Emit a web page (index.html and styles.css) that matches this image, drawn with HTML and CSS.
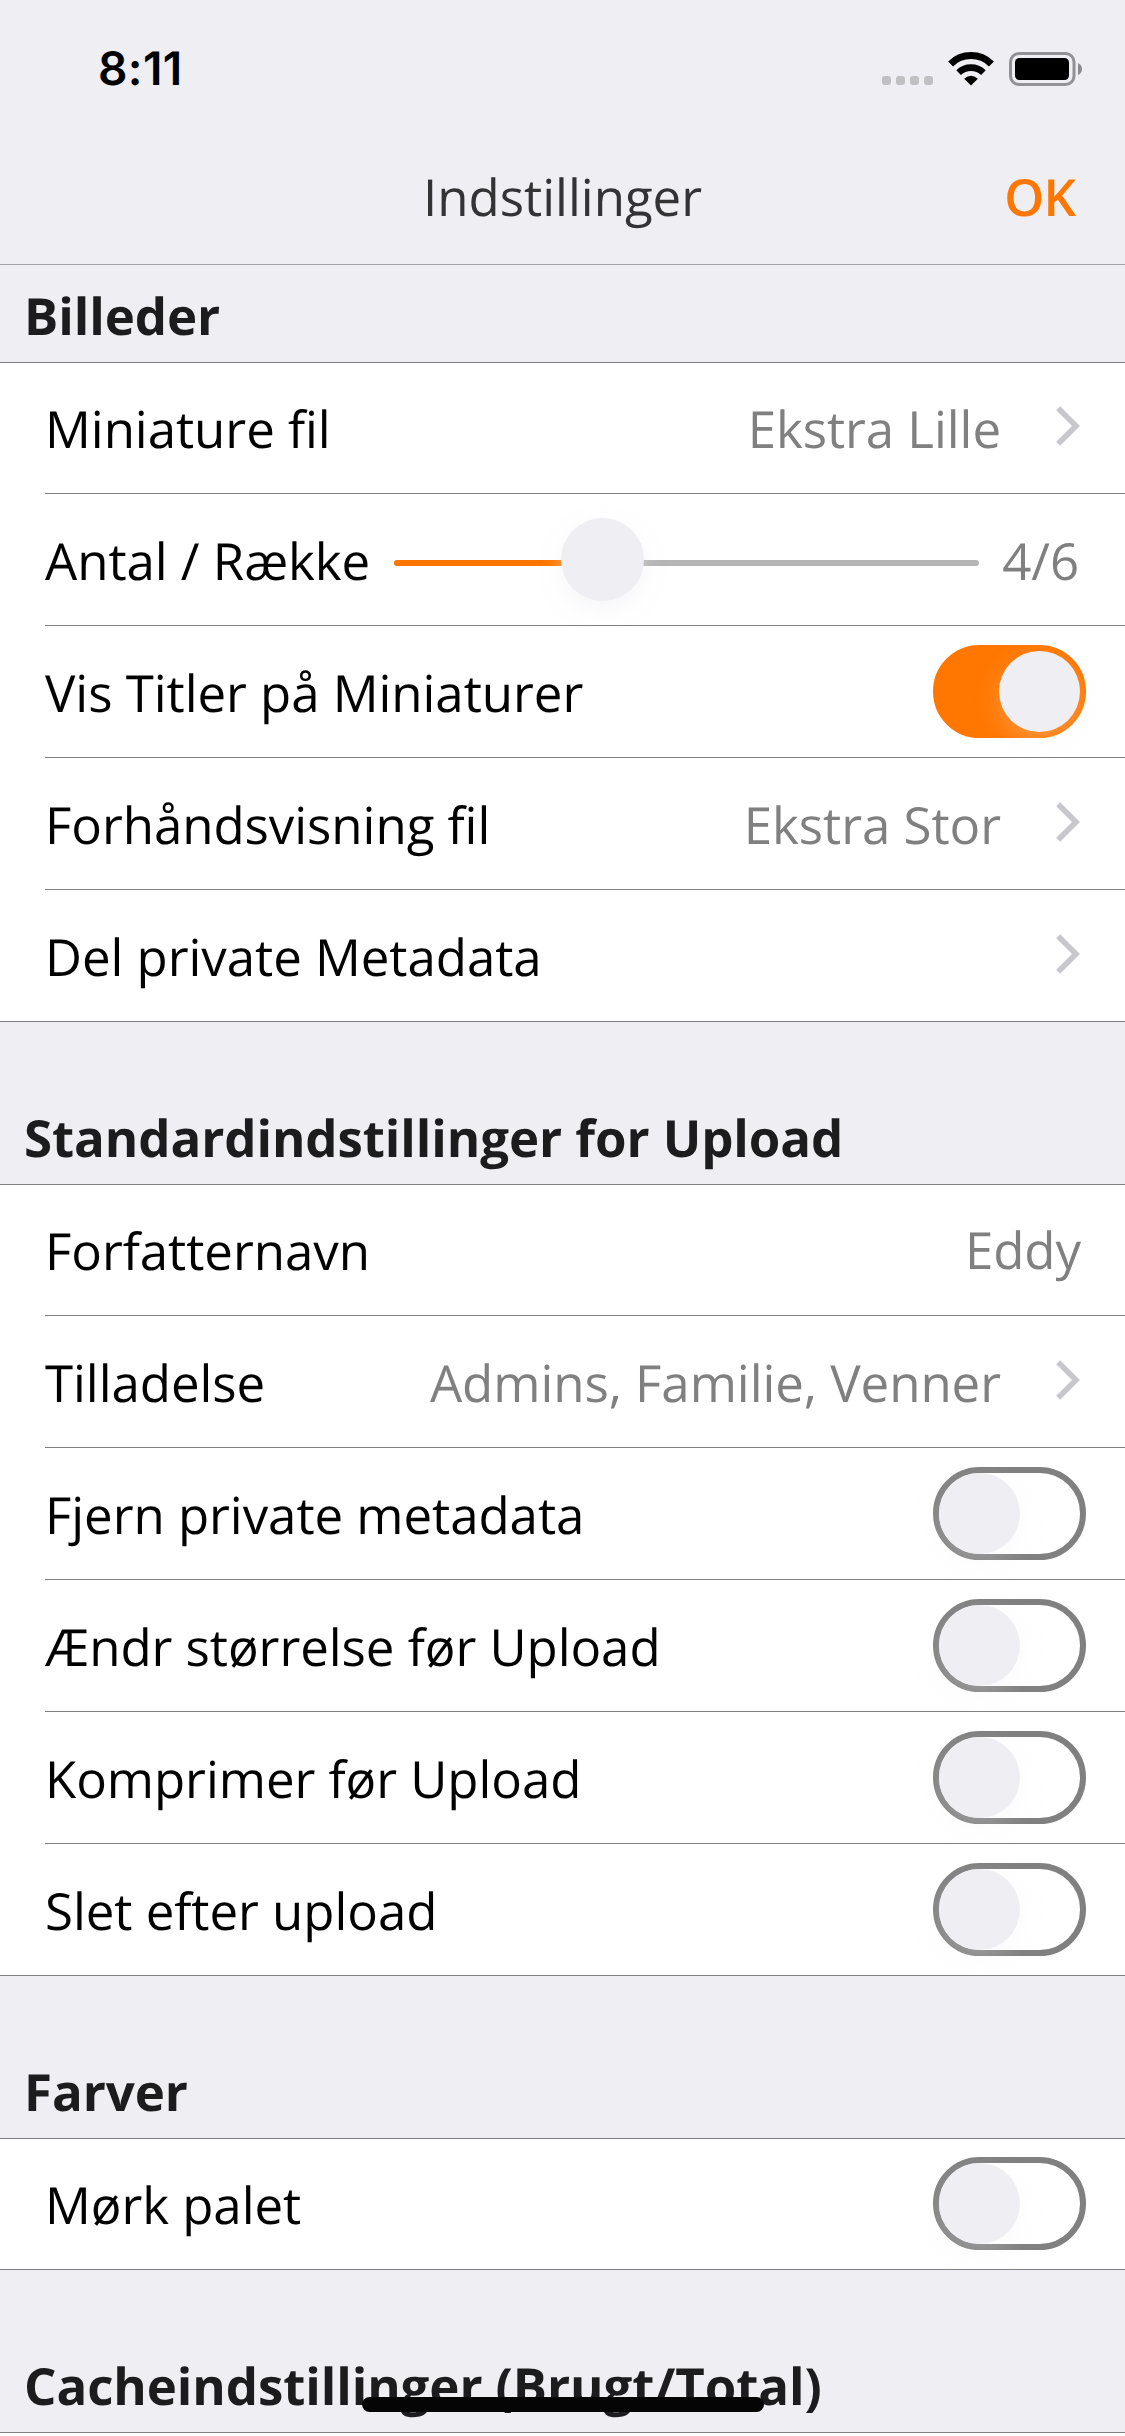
FILE: index.html
```html
<!DOCTYPE html>
<html lang="da">
<head>
<meta charset="utf-8">
<title>Indstillinger</title>
<link rel="stylesheet" href="styles.css">
</head>
<body>
<svg class="defs" width="0" height="0" aria-hidden="true">
  <symbol id="chevron" viewBox="0 0 24 40"><path d="M2.2 2.2 20 20 2.2 37.8" fill="none" stroke="#c7c7cc" stroke-width="5.6"/></symbol>
</svg>
<div class="screen">
  <header class="top">
    <div class="status">
      <span class="time">8:11</span>
      <div class="indicators">
        <div class="dots"><i></i><i></i><i></i><i></i></div>
        <svg class="wifi" width="46" height="34" viewBox="0 0 46 34">
          <path d="M2.6 12A29 29 0 0 1 43.4 12" fill="none" stroke="#000" stroke-width="7"/>
          <path d="M10.6 20.6A18 18 0 0 1 35.4 20.6" fill="none" stroke="#000" stroke-width="6.6"/>
          <path d="M16.2 26.8Q23 20.6 29.8 26.8L23 33.6Z" fill="#000"/>
        </svg>
        <svg class="battery" width="74" height="34" viewBox="0 0 74 34">
          <rect x="1.5" y="1.5" width="63.5" height="31" rx="8.5" fill="none" stroke="#929295" stroke-width="3"/>
          <rect x="6" y="6" width="54" height="22" rx="4.5" fill="#000"/>
          <path d="M69 11Q73 13 73 17T69 23Z" fill="#8c8c8f"/>
        </svg>
      </div>
    </div>
    <div class="nav">
      <h1 class="title">Indstillinger</h1>
      <span class="done">OK</span>
    </div>
  </header>

  <main>
    <h2 class="heading first">Billeder</h2>
    <div class="list">
      <div class="row"><span class="label">Miniature fil</span><span class="value">Ekstra Lille</span><svg class="chevron"><use href="#chevron"/></svg></div>
      <div class="row">
        <span class="label">Antal / Række</span>
        <div class="slider"><div class="fill"></div><div class="knob"></div></div>
        <span class="value count">4/6</span>
      </div>
      <div class="row"><span class="label">Vis Titler på Miniaturer</span><span class="switch on"></span></div>
      <div class="row"><span class="label">Forhåndsvisning fil</span><span class="value">Ekstra Stor</span><svg class="chevron"><use href="#chevron"/></svg></div>
      <div class="row"><span class="label">Del private Metadata</span><svg class="chevron"><use href="#chevron"/></svg></div>
    </div>

    <h2 class="heading">Standardindstillinger for Upload</h2>
    <div class="list">
      <div class="row"><span class="label">Forfatternavn</span><span class="value field">Eddy</span></div>
      <div class="row"><span class="label">Tilladelse</span><span class="value">Admins, Familie, Venner</span><svg class="chevron"><use href="#chevron"/></svg></div>
      <div class="row"><span class="label">Fjern private metadata</span><span class="switch"></span></div>
      <div class="row"><span class="label">Ændr størrelse før Upload</span><span class="switch"></span></div>
      <div class="row"><span class="label">Komprimer før Upload</span><span class="switch"></span></div>
      <div class="row"><span class="label">Slet efter upload</span><span class="switch"></span></div>
    </div>

    <h2 class="heading">Farver</h2>
    <div class="list">
      <div class="row"><span class="label">Mørk palet</span><span class="switch"></span></div>
    </div>

    <h2 class="heading">Cacheindstillinger (Brugt/Total)</h2>
    <div class="list"><div class="row"></div></div>
  </main>
  <div class="home"></div>
</div>
</body>
</html>
```
FILE: styles.css
```css
* { box-sizing: border-box; }
body { margin: 0; background: #efeef3; }
.defs { position: absolute; }
.screen {
  position: relative;
  width: 1125px;
  height: 2436px;
  overflow: hidden;
  background: #efeef3;
  font-family: "Open Sans", "Noto Sans", sans-serif;
  font-size: 51px;
  line-height: 70px;
  color: #000;
  text-rendering: geometricPrecision;
}

.top { height: 265px; border-bottom: 1px solid #a5a5a9; }
.status { height: 132px; padding: 41px 43px 0 98px; display: flex; justify-content: space-between; }
.time { font: 600 46px/56px Inter, sans-serif; letter-spacing: 0.4px; }
.indicators { display: flex; align-items: flex-start; padding-top: 11px; }
.dots { display: flex; gap: 5px; margin: 24px 15px 0 0; }
.dots i { width: 9px; height: 9px; border-radius: 3px; background: #c0c0c2; }
.wifi { margin-right: 15px; }
.battery { margin-right: -1px; }
.nav { height: 132px; display: grid; grid-template-columns: 1fr auto 1fr; align-items: center; padding: 0 49px 5px; }
.title { grid-column: 2; margin: 0; font-size: 51px; font-weight: 400; color: #333336; }
.done { justify-self: end; margin-right: 1px; font-weight: 600; letter-spacing: -1px; color: #ff7700; }

.heading {
  margin: 0;
  height: 162px;
  padding: 80px 24px 0;
  font-size: 51px;
  font-weight: 700;
  line-height: 70px;
  letter-spacing: -0.08px;
  color: #1c1c1e;
  white-space: nowrap;
}
.heading.first { height: 97px; padding-top: 15px; }

.list { background: #fff; border-top: 1px solid #808080; border-bottom: 1px solid #808080; }
.row {
  display: flex;
  align-items: center;
  height: 132px;
  margin-left: 45px;
  padding: 1px 39px 0 0;
  border-bottom: 1px solid #808080;
}
.row:first-child { height: 131px; padding-top: 0; }
.row:last-child { height: 131px; border-bottom: 0; }
.row:first-child:last-child { height: 130px; }
.label { padding-bottom: 1px; letter-spacing: -0.05px; white-space: nowrap; }
.value { margin-left: auto; padding-bottom: 1px; letter-spacing: -0.05px; color: #808080; white-space: nowrap; }
.field { padding-bottom: 3px; margin-right: 5px; }
.chevron { width: 24px; height: 40px; margin: 0 6px 4px 55px; flex: none; }
.label + .chevron { margin-left: auto; }

.switch {
  display: flex;
  width: 153px;
  height: 93px;
  margin: 0 0 1px auto;
  border: 6px solid #808080;
  border-radius: 47px;
}
.switch::before {
  content: "";
  width: 81px;
  height: 81px;
  border-radius: 50%;
  background: #efeef3;
  box-shadow: 0 9px 24px rgba(239, 238, 243, 0.25);
}
.switch.on { justify-content: flex-end; background: #ff7700; border-color: #ff7700; }

.slider { position: relative; width: 585px; height: 6px; margin: 6px 0 0; border-radius: 3px; background: #b5b5b5; }
.label:has(+ .slider) { width: 349px; }
.fill { width: 36%; height: 6px; border-radius: 3px; background: #ff7700; }
.knob {
  position: absolute;
  left: 167px;
  top: -42px;
  width: 83px;
  height: 83px;
  border-radius: 50%;
  background: #efeef3;
  box-shadow: 0 9px 18px rgba(239, 238, 243, 0.5);
}
.count { margin-right: 7px; }

.home { position: absolute; left: 362px; top: 2397px; width: 402px; height: 15px; border-radius: 8px; background: #050505; }
```
